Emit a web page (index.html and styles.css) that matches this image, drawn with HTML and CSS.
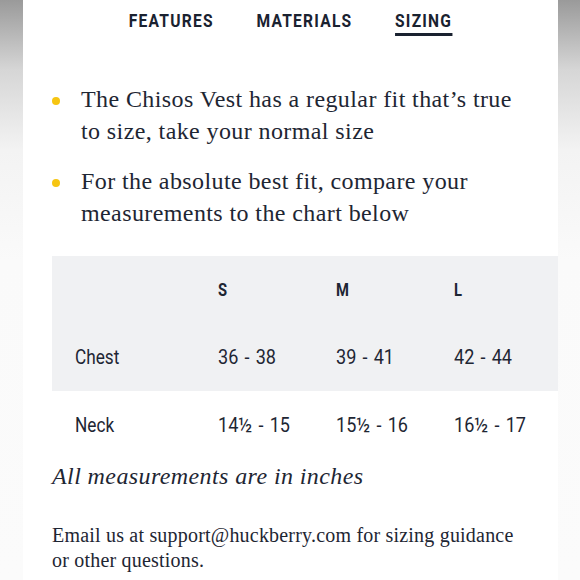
FILE: index.html
```html
<!DOCTYPE html>
<html lang="en">
<head>
<meta charset="utf-8">
<title>Sizing</title>
<link rel="stylesheet" href="styles.css">
</head>
<body>
<div class="page">
  <div class="strip"></div>
  <main class="panel">
    <nav class="tabs">
      <a class="tab">FEATURES</a>
      <a class="tab">MATERIALS</a>
      <a class="tab active">SIZING</a>
    </nav>
    <div class="content">
      <ul class="bullets">
        <li>The Chisos Vest has a regular fit that’s true to size, take your normal size</li>
        <li>For the absolute best fit, compare your measurements to the chart below</li>
      </ul>
      <table class="chart">
        <colgroup><col class="c1"><col class="c2"><col class="c3"><col class="c4"></colgroup>
        <thead>
          <tr class="shade"><th></th><th><span class="cond">S</span></th><th><span class="cond">M</span></th><th><span class="cond">L</span></th></tr>
        </thead>
        <tbody>
          <tr class="shade"><td><span class="cond">Chest</span></td><td><span class="cond num">36 - 38</span></td><td><span class="cond num">39 - 41</span></td><td><span class="cond num">42 - 44</span></td></tr>
          <tr><td><span class="cond">Neck</span></td><td><span class="cond num">14½ - 15</span></td><td><span class="cond num">15½ - 16</span></td><td><span class="cond num">16½ - 17</span></td></tr>
        </tbody>
      </table>
      <p class="note">All measurements are in inches</p>
      <p class="email">Email us at support@huckberry.com for sizing guidance or other questions.</p>
    </div>
  </main>
  <div class="strip"></div>
</div>
</body>
</html>
```
FILE: styles.css
```css
html, body {
  margin: 0;
  padding: 0;
  background: #fafafa;
}
body {
  width: 580px;
  height: 580px;
  overflow: hidden;
}
.page {
  display: flex;
  height: 580px;
}
.strip {
  flex: 0 0 23px;
  background: linear-gradient(#9a9a9a 0px, #d6d6d6 70px, #f3f3f3 150px, #fafafa 260px, #fbfbfb 580px);
}
.strip:last-child {
  flex-basis: 22px;
}
.panel {
  flex: 0 0 535px;
  background: #ffffff;
  color: #1e2633;
}
.tabs {
  display: flex;
  justify-content: center;
  gap: 52px;
  padding-top: 12px;
  transform: scaleX(0.82);
}
.tab {
  font-family: Roboto, "Liberation Sans", sans-serif;
  font-weight: 700;
  font-size: 19px;
  line-height: 18px;
  letter-spacing: 1.5px;
  color: #1a2230;
  padding-bottom: 3px;
  border-bottom: 3px solid transparent;
}
.tab.active {
  border-bottom-color: #1a2230;
}
.content {
  padding-left: 29px;
}
.bullets {
  list-style: none;
  margin: 47px 0 0;
  padding: 0 30px 0 0;
  font-family: "Liberation Serif", serif;
  font-size: 24px;
  letter-spacing: 0.4px;
  line-height: 32px;
  color: #1e2633;
}
.bullets li {
  display: flex;
  margin-bottom: 18px;
}
.bullets li::before {
  content: "";
  flex: 0 0 8px;
  height: 8px;
  margin-top: 14px;
  margin-right: 21px;
  border-radius: 50%;
  background: #f6c512;
}
.chart {
  width: 100%;
  margin-top: 27px;
  border-collapse: collapse;
  table-layout: fixed;
  font-family: Roboto, "Liberation Sans", sans-serif;
  color: #1e2633;
}
.c1 { width: 143px; }
.c2 { width: 118px; }
.c3 { width: 118px; }
.chart th, .chart td {
  text-align: left;
  padding: 0 0 0 23px;
  vertical-align: middle;
  white-space: nowrap;
}
.chart th {
  font-size: 18px;
  font-weight: 700;
  height: 67px;
}
.chart td {
  font-size: 21px;
  font-weight: 400;
  height: 68px;
}
.chart tbody tr:last-child td {
  height: 67px;
}
.cond {
  display: inline-block;
  transform: scaleX(0.82);
  transform-origin: left center;
}
.cond.num {
  word-spacing: 2px;
  transform: scaleX(0.86);
}
.shade {
  background: #f0f1f3;
}
.note {
  margin: 4px 0 0;
  font-family: "Liberation Serif", serif;
  font-style: italic;
  font-size: 24px;
  letter-spacing: 0.4px;
  line-height: 28px;
  color: #1e2633;
}
.email {
  margin: 33px 0 0;
  font-family: "Liberation Serif", serif;
  font-size: 20px;
  letter-spacing: 0.2px;
  line-height: 25px;
  color: #1e2633;
  padding-right: 36px;
}
```
